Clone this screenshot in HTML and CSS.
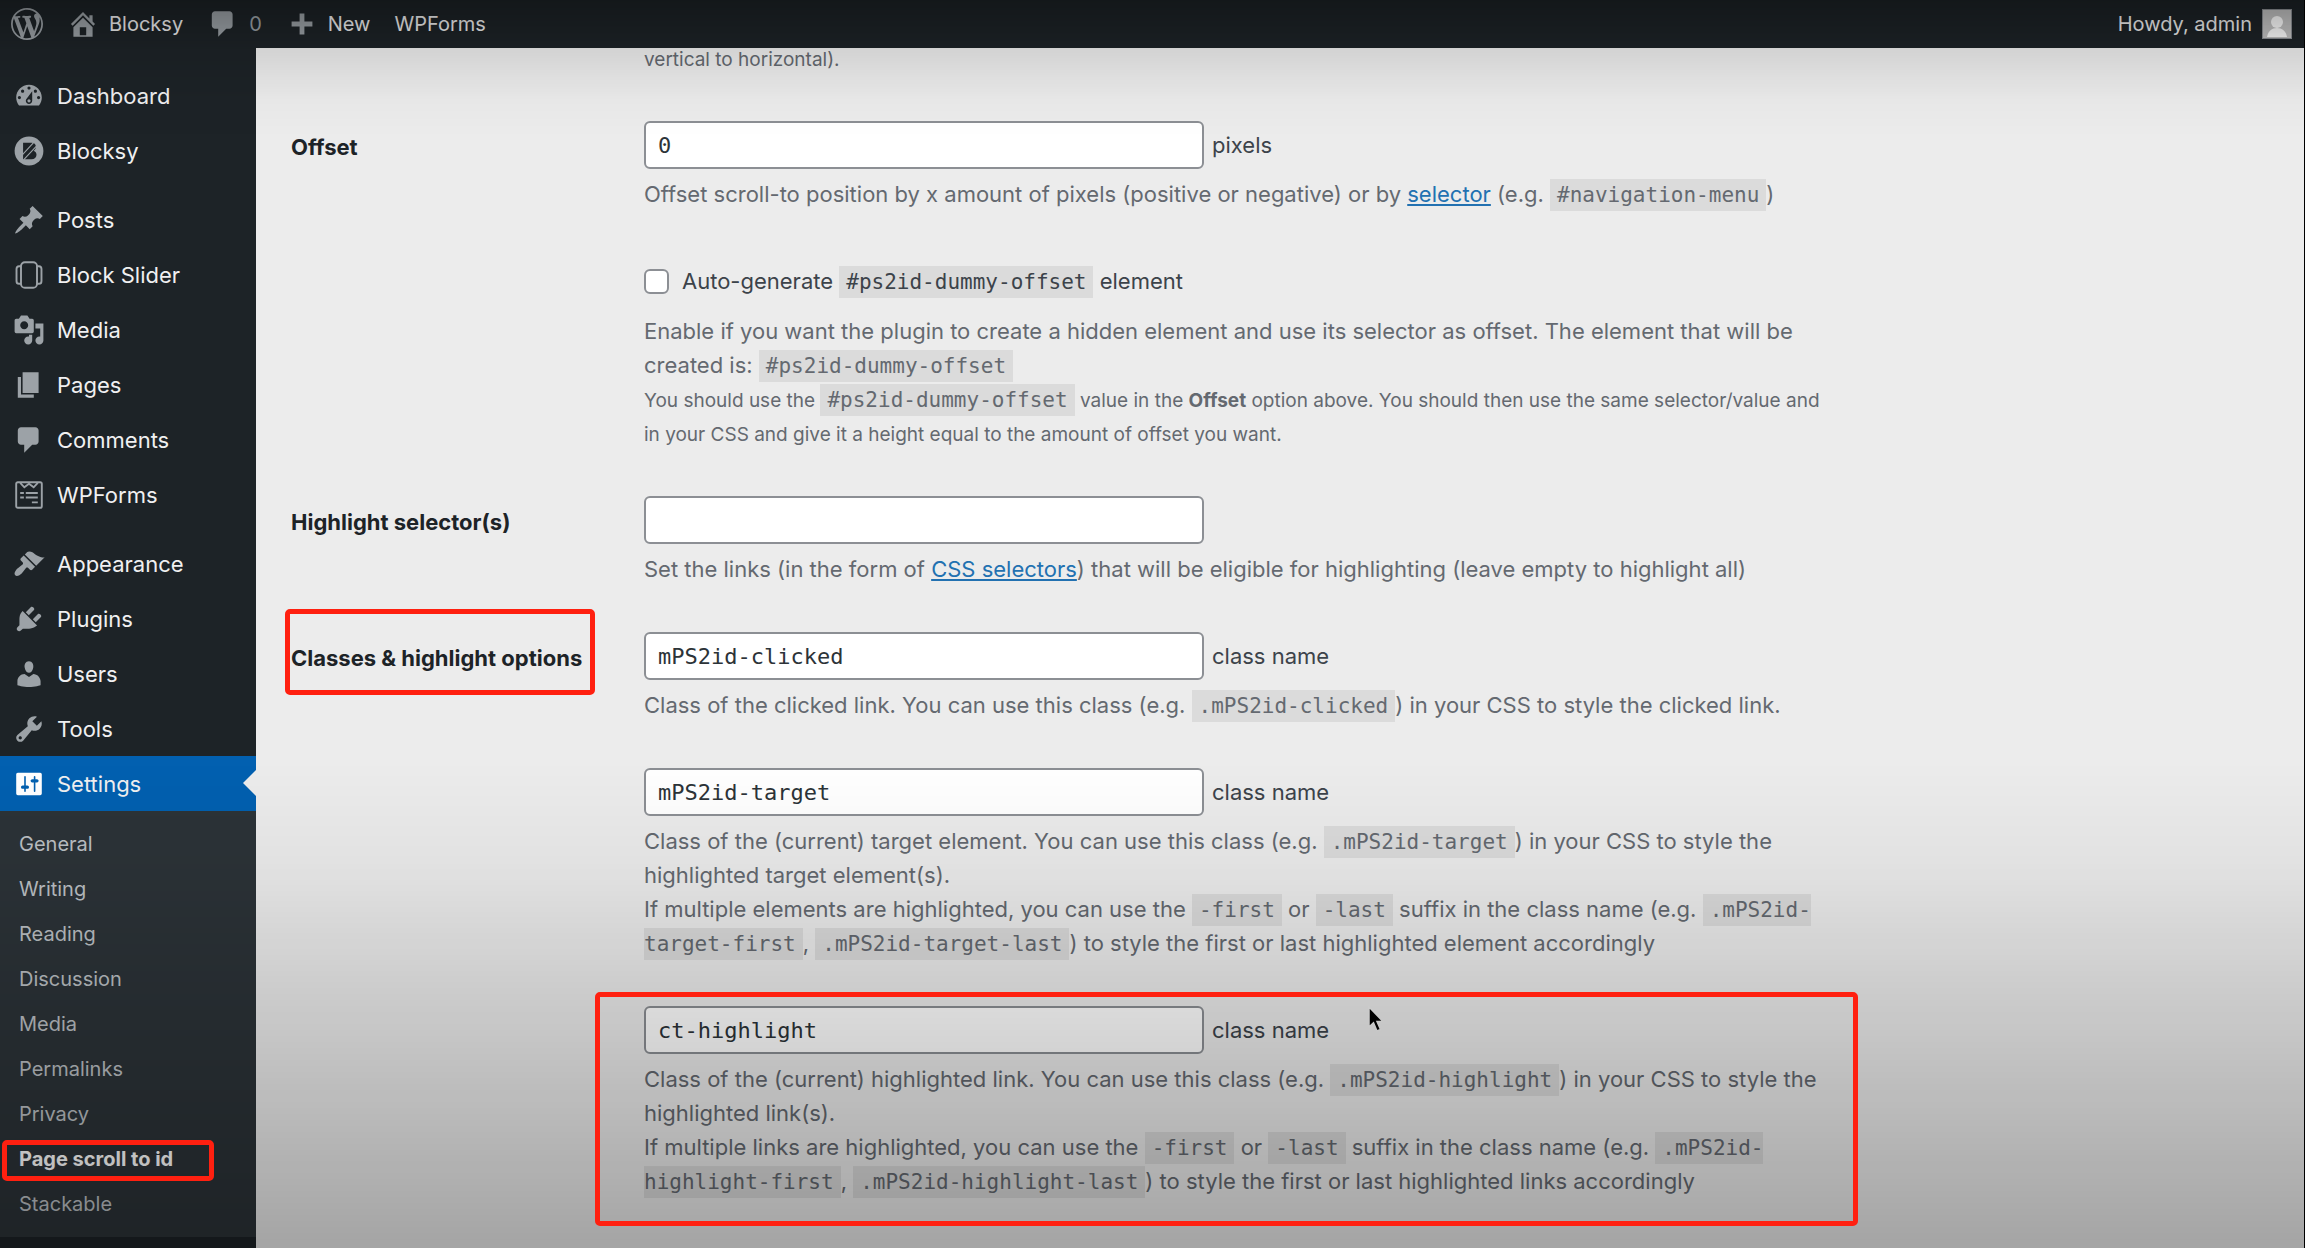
FILE: index.html
```
<!DOCTYPE html>
<html lang="en">
<head>
  <meta charset="UTF-8">
  <meta name="viewport" content="width=device-width, initial-scale=1.0">
  <title>Page scroll to id - Blocksy</title>
  <link rel="stylesheet" href="styles.css">
</head>
<body>
  <header class="adminbar">
    <a class="bar-logo" href="#" aria-label="About WordPress">
      <svg class="icon" viewBox="0 0 20 20"><path d="M20 10c0-5.51-4.49-10-10-10C4.48 0 0 4.49 0 10c0 5.52 4.48 10 10 10 5.51 0 10-4.48 10-10zM7.78 15.37L4.37 6.22c.55-.02 1.17-.08 1.17-.08.5-.06.44-1.13-.06-1.11 0 0-1.45.11-2.37.11-.18 0-.37 0-.58-.01C4.12 2.69 6.87 1.11 10 1.11c2.33 0 4.45.87 6.05 2.34-.68-.11-1.65.39-1.65 1.58 0 .74.45 1.36.9 2.1.35.61.55 1.36.55 2.46 0 1.49-1.4 5-1.4 5l-3.03-8.37c.54-.02.82-.17.82-.17.5-.05.44-1.25-.06-1.22 0 0-1.44.12-2.38.12-.87 0-2.33-.12-2.33-.12-.5-.03-.56 1.2-.06 1.22l.92.08 1.26 3.41zM17.41 10c.24-.64.74-1.87.43-4.25.7 1.29 1.05 2.71 1.05 4.25 0 3.29-1.73 6.24-4.4 7.78.97-2.59 1.94-5.2 2.92-7.78zM6.1 18.09C3.12 16.65 1.11 13.53 1.11 10c0-1.3.23-2.48.72-3.59C3.25 10.3 4.67 14.2 6.1 18.09zm4.03-6.63l2.58 6.98c-.86.29-1.76.45-2.71.45-.79 0-1.57-.11-2.29-.33.81-2.38 1.62-4.74 2.42-7.1z"/></svg>
    </a>
    <a class="bar-item" href="#">
      <svg class="icon" viewBox="0 0 20 20"><path d="M16 8.5l1.53 1.53-1.06 1.06L10 4.6l-6.47 6.49-1.06-1.06L10 2.5l4 4v-2h2v4zm-6-2.46l6 5.99V18H4v-5.97zM12 17v-5H8v5h4z"/></svg>
      <span>Blocksy</span>
    </a>
    <a class="bar-item bar-comments" href="#">
      <svg class="icon" viewBox="0 0 20 20"><path d="M5 2h9c1.1 0 2 .9 2 2v7c0 1.1-.9 2-2 2h-2l-5 5v-5H5c-1.1 0-2-.9-2-2V4c0-1.1.9-2 2-2z"/></svg>
      <span>0</span>
    </a>
    <a class="bar-item bar-new" href="#">
      <svg class="icon" viewBox="0 0 20 20"><path d="M8.500 3.500h3v5h5v3h-5v5h-3v-5h-5v-3h5z"/></svg>
      <span>New</span>
    </a>
    <a class="bar-item" href="#">WPForms</a>
    <a class="bar-item bar-account" href="#">
      <span>Howdy, admin</span>
      <svg class="avatar" viewBox="0 0 28 28"><rect width="28" height="28" fill="#c4c4c4"/><circle cx="14" cy="12" r="6" fill="#fff"/><path d="M4 27c1-6 5-9 10-9s9 3 10 9z" fill="#fff"/></svg>
    </a>
  </header>

  <div class="wrap">
    <nav class="sidebar">
      <ul class="menu">
        <li><a href="#"><svg class="icon" viewBox="0 0 20 20"><path d="M3.76 16h12.48c1.1-1.37 1.76-3.11 1.76-5 0-4.42-3.58-8-8-8s-8 3.58-8 8c0 1.89.66 3.63 1.76 5zM10 4c.55 0 1 .45 1 1s-.45 1-1 1-1-.45-1-1 .45-1 1-1zM6 6c.55 0 1 .45 1 1s-.45 1-1 1-1-.45-1-1 .45-1 1-1zm8 0c.55 0 1 .45 1 1s-.45 1-1 1-1-.45-1-1 .45-1 1-1zm-5.37 5.55L12 7v6c0 1.1-.9 2-2 2s-2-.9-2-2c0-.57.24-1.08.63-1.45zM4 10c.55 0 1 .45 1 1s-.45 1-1 1-1-.45-1-1 .45-1 1-1zm12 0c.55 0 1 .45 1 1s-.45 1-1 1-1-.45-1-1 .45-1 1-1zm-5 3c0-.55-.45-1-1-1s-1 .45-1 1 .45 1 1 1 1-.45 1-1z"/></svg>Dashboard</a></li>
        <li><a href="#"><svg class="icon" viewBox="0 0 20 20"><circle cx="10" cy="10" r="9"/><path class="cut" d="M6.300 4.800h5.200c1.800 0 2.800 1 2.800 2.500 0 1.100-.5 2-1.400 2.500 1.100.4 1.800 1.400 1.800 2.600 0 1.700-1.300 2.800-3.100 2.800H6.300z"/><path class="slash" d="M5.800 12.400L13 4.600M6.600 15.600l8.200-8.800"/></svg>Blocksy</a></li>
        <li class="gap"><a href="#"><svg class="icon" viewBox="0 0 20 20"><path d="M10.44 3.02l1.82-1.82 6.36 6.35-1.83 1.82c-1.05-.68-2.48-.57-3.41.36l-.75.75c-.92.93-1.04 2.35-.35 3.41l-1.83 1.82-2.41-2.41-2.8 2.79c-.42.42-3.38 2.71-3.8 2.29s1.86-3.39 2.28-3.81l2.79-2.79L4.1 9.36l1.83-1.82c1.05.69 2.48.57 3.4-.36l.75-.75c.93-.92 1.05-2.35.36-3.41z"/></svg>Posts</a></li>
        <li><a href="#"><svg class="icon line" viewBox="0 0 20 20"><rect x="5" y="2" width="10" height="16" rx="2.400"/><path d="M5 4.500H3.800c-1 0-1.600.8-1.600 1.800v7.400c0 1 .6 1.800 1.600 1.800H5M15 4.500h1.200c1 0 1.600.8 1.600 1.800v7.400c0 1-.6 1.800-1.600 1.800H15"/></svg>Block Slider</a></li>
        <li><a href="#"><svg class="icon" viewBox="0 0 20 20"><path d="M13 11V4c0-.55-.45-1-1-1h-1.67L9 1H5L3.67 3H2c-.55 0-1 .45-1 1v7c0 .55.45 1 1 1h10c.55 0 1-.45 1-1zM7 4.5c1.38 0 2.5 1.12 2.5 2.5S8.38 9.5 7 9.5 4.5 8.38 4.5 7 5.62 4.5 7 4.5zM14 6h5v10.5c0 1.38-1.12 2.5-2.5 2.5S14 17.88 14 16.5s1.12-2.5 2.5-2.5c.17 0 .34.02.5.05V9h-3V6zm-4 8.05V13h2v3.5c0 1.38-1.12 2.5-2.5 2.5S7 17.88 7 16.5 8.12 14 9.5 14c.17 0 .34.02.5.05z"/></svg>Media</a></li>
        <li><a href="#"><svg class="icon" viewBox="0 0 20 20"><path d="M6 15V2h10v13H6zm-1 1h8v2H3V5h2v11z"/></svg>Pages</a></li>
        <li><a href="#"><svg class="icon" viewBox="0 0 20 20"><path d="M5 2h9c1.1 0 2 .9 2 2v7c0 1.1-.9 2-2 2h-2l-5 5v-5H5c-1.1 0-2-.9-2-2V4c0-1.1.9-2 2-2z"/></svg>Comments</a></li>
        <li><a href="#"><svg class="icon line" viewBox="0 0 20 20"><rect x="2" y="2" width="16" height="16" rx="1"/><path d="M4.5 2.4l2.6 2.8L10 3l2.9 2.2 2.6-2.8M4.5 8.7h2.3M8 8.7h7.5M4.5 11.6h2.3M8 11.6h7.5M11.8 14.6h3.7"/></svg>WPForms</a></li>
        <li class="gap"><a href="#"><svg class="icon" viewBox="0 0 20 20"><path d="M14.48 11.06L7.41 3.99l1.5-1.5c.5-.56 2.3-.47 3.51.32 1.21.8 1.43 1.28 2.91 2.1 1.18.64 2.45 1.26 4.45.85zm-.71.71L6.7 4.7 4.93 6.47c-.39.39-.39 1.02 0 1.41l1.06 1.06c.39.39.39 1.03 0 1.42-.6.6-1.43 1.11-2.21 1.69-.35.26-.7.53-1.01.84C1.43 14.23.4 16.08 1.4 17.07c.99 1 2.84-.03 4.18-1.36.31-.31.58-.66.85-1.02.57-.78 1.08-1.61 1.69-2.21.39-.39 1.02-.39 1.41 0l1.06 1.06c.39.39 1.02.39 1.41 0z"/></svg>Appearance</a></li>
        <li><a href="#"><svg class="icon" viewBox="0 0 20 20"><path d="M13.11 4.36L9.87 7.6 8 5.73l3.24-3.24c.35-.34 1.05-.2 1.56.32.52.51.66 1.21.31 1.55zm-8 1.77l.91-1.12 9.01 9.01-1.19.84c-.71.71-2.63 1.16-3.82 1.16H6.14L4.9 17.26c-.59.59-1.54.59-2.12 0-.59-.58-.59-1.53 0-2.12l1.24-1.24v-3.88c0-1.13.4-3.19 1.09-3.89zm7.26 3.97l3.24-3.24c.34-.35 1.04-.21 1.55.31.52.51.66 1.21.31 1.55l-3.24 3.25z"/></svg>Plugins</a></li>
        <li><a href="#"><svg class="icon" viewBox="0 0 20 20"><path d="M10 9.25c-2.27 0-2.73-3.44-2.73-3.44C7 4.02 7.82 2 9.97 2c2.16 0 2.98 2.02 2.71 3.81 0 0-.41 3.44-2.68 3.44zm0 2.57L12.72 10c2.39 0 4.52 2.33 4.52 4.53v2.49s-3.65 1.13-7.24 1.13c-3.65 0-7.24-1.13-7.24-1.13v-2.49c0-2.25 1.94-4.48 4.47-4.48z"/></svg>Users</a></li>
        <li><a href="#"><svg class="icon" viewBox="0 0 20 20"><path d="M16.68 9.77c-1.34 1.34-3.3 1.67-4.95.99l-5.41 6.52c-.99.99-2.59.99-3.58 0s-.99-2.59 0-3.57l6.52-5.42c-.68-1.65-.35-3.61.99-4.95 1.28-1.28 3.12-1.62 4.72-1.06l-2.89 2.89 2.82 2.82 2.86-2.87c.53 1.58.18 3.39-1.08 4.65zM3.81 16.21c.4.39 1.04.39 1.43 0 .4-.4.4-1.04 0-1.43-.39-.4-1.03-.4-1.43 0-.39.39-.39 1.03 0 1.43z"/></svg>Tools</a></li>
        <li class="current"><a href="#"><svg class="icon" viewBox="0 0 20 20"><path d="M18 16V4c0-.55-.45-1-1-1H3c-.55 0-1 .45-1 1v12c0 .55.45 1 1 1h14c.55 0 1-.45 1-1zM8 11h1c.55 0 1 .45 1 1s-.45 1-1 1H8v1.5c0 .28-.22.5-.5.5s-.5-.22-.5-.5V13H6c-.55 0-1-.45-1-1s.45-1 1-1h1V5.5c0-.28.22-.5.5-.5s.5.22.5.5V11zm5-2h-1c-.55 0-1-.45-1-1s.45-1 1-1h1V5.5c0-.28.22-.5.5-.5s.5.22.5.5V7h1c.55 0 1 .45 1 1s-.45 1-1 1h-1v5.5c0 .28-.22.5-.5.5s-.5-.22-.5-.5V9z"/></svg>Settings</a></li>
      </ul>
      <ul class="submenu">
        <li><a href="#">General</a></li>
        <li><a href="#">Writing</a></li>
        <li><a href="#">Reading</a></li>
        <li><a href="#">Discussion</a></li>
        <li><a href="#">Media</a></li>
        <li><a href="#">Permalinks</a></li>
        <li><a href="#">Privacy</a></li>
        <li class="marked"><a class="active" href="#">Page scroll to id</a></li>
        <li><a href="#">Stackable</a></li>
      </ul>
    </nav>

    <main class="content">
      <form class="form">
        <div class="row">
          <div class="fields">
            <p class="desc first-line"><small>vertical to horizontal).</small></p>
          </div>
        </div>

        <div class="row">
          <label class="title" for="offset">Offset</label>
          <div class="fields">
            <div class="field">
              <div class="control"><input type="text" id="offset" value="0"><span>pixels</span></div>
              <p class="desc">Offset scroll-to position by x amount of pixels (positive or negative) or by <a href="#">selector</a> (e.g. <code>#navigation-menu</code>)</p>
            </div>
            <div class="field check-field">
              <div class="check"><input type="checkbox" id="dummy"><label for="dummy">Auto-generate <code>#ps2id-dummy-offset</code> element</label></div>
              <p class="desc">Enable if you want the plugin to create a hidden element and use its selector as offset. The element that will be<br>
              created is: <code>#ps2id-dummy-offset</code><br>
              <small>You should use the <code>#ps2id-dummy-offset</code> value in the <b>Offset</b> option above. You should then use the same selector/value and<br>
              in your CSS and give it a height equal to the amount of offset you want.</small></p>
            </div>
          </div>
        </div>

        <div class="row">
          <label class="title" for="selectors">Highlight selector(s)</label>
          <div class="fields">
            <div class="field">
              <div class="control"><input type="text" id="selectors" value=""></div>
              <p class="desc">Set the links (in the form of <a href="#">CSS selectors</a>) that will be eligible for highlighting (leave empty to highlight all)</p>
            </div>
          </div>
        </div>

        <div class="row">
          <label class="title marked" for="clicked">Classes &amp; highlight options</label>
          <div class="fields">
            <div class="field">
              <div class="control"><input type="text" id="clicked" value="mPS2id-clicked"><label for="clicked">class name</label></div>
              <p class="desc">Class of the clicked link. You can use this class (e.g. <code>.mPS2id-clicked</code>) in your CSS to style the clicked link.</p>
            </div>
            <div class="field">
              <div class="control"><input type="text" id="target" value="mPS2id-target"><label for="target">class name</label></div>
              <p class="desc">Class of the (current) target element. You can use this class (e.g. <code>.mPS2id-target</code>) in your CSS to style the<br>
              highlighted target element(s).<br>
              If multiple elements are highlighted, you can use the <code>-first</code> or <code>-last</code> suffix in the class name (e.g. <code>.mPS2id-<br>target-first</code>, <code>.mPS2id-target-last</code>) to style the first or last highlighted element accordingly</p>
            </div>
            <div class="field marked">
              <div class="control"><input type="text" id="highlight" value="ct-highlight"><label for="highlight">class name</label>
                <svg class="cursor" viewBox="0 0 18 28"><path d="M2 1v20l4.500-4.200 3.500 8.200 3.500-1.500-3.500-8h6z" fill="#000" stroke="#eee" stroke-width="1.500"/></svg>
              </div>
              <p class="desc">Class of the (current) highlighted link. You can use this class (e.g. <code>.mPS2id-highlight</code>) in your CSS to style the<br>
              highlighted link(s).<br>
              If multiple links are highlighted, you can use the <code>-first</code> or <code>-last</code> suffix in the class name (e.g. <code>.mPS2id-<br>highlight-first</code>, <code>.mPS2id-highlight-last</code>) to style the first or last highlighted links accordingly</p>
            </div>
          </div>
        </div>
      </form>
    </main>
  </div>
  <div class="shade"></div>
</body>
</html>
```
FILE: styles.css
```
*,
*::before,
*::after {
  box-sizing: border-box;
}
body {
  margin: 0;
  min-height: 100vh;
  display: flex;
  flex-direction: column;
  overflow: hidden;
  border-right: 1px solid #000;
  font-family: Inter, "Liberation Sans", sans-serif;
  font-size: 22px;
  color: #3c434a;
  background-color: #ececec;
}
a {
  color: #2271b1;
}
ul {
  list-style: none;
  margin: 0;
  padding: 0;
}
.icon {
  width: 32px;
  height: 32px;
  flex: none;
  fill: #9ca2a7;
}
.icon .cut {
  fill: #1d2327;
}
.icon .slash {
  stroke: #9ca2a7;
  stroke-width: 0.7;
}
.icon.line {
  fill: none;
  stroke: #9ca2a7;
  stroke-width: 1.2;
}

/* top bar */
.adminbar {
  height: 48px;
  display: flex;
  align-items: center;
  padding: 0 12px 0 11px;
  background-color: #1d2327;
  font-size: 20px;
}
.adminbar a {
  display: flex;
  align-items: center;
  color: #f0f0f1;
  text-decoration: none;
}
.bar-item {
  margin-left: 24px;
  gap: 10px;
}
.adminbar .bar-comments {
  color: #9ca2a7;
}
.adminbar .bar-account {
  margin-left: auto;
}
.avatar {
  width: 30px;
  height: 30px;
  border: 1px solid #8c8f94;
}

/* left menu */
.wrap {
  flex: 1;
  display: flex;
}
.sidebar {
  width: 256px;
  flex: none;
  background-color: #1d2327;
}
.menu {
  padding-top: 20px;
}
.menu a {
  height: 55px;
  display: flex;
  align-items: center;
  gap: 12px;
  padding-left: 13px;
  color: #f0f0f1;
  text-decoration: none;
}
.menu .gap {
  margin-top: 14px;
}
.current {
  position: relative;
  background-color: #0260b0;
}
.current .icon {
  fill: #fff;
}
.current::after {
  content: "";
  position: absolute;
  right: 0;
  top: 14px;
  border: 13px solid transparent;
  border-left: 0;
  border-right-color: #ececec;
}
.submenu {
  padding: 11px 0 10px;
  background-color: #2c3338;
}
.submenu a {
  display: block;
  padding-left: 19px;
  line-height: 45px;
  font-size: 20px;
  color: #bcc0c4;
  text-decoration: none;
}
.submenu .active {
  color: #fff;
  font-weight: 700;
}

/* settings form */
.content {
  flex: 1;
  padding-left: 35px;
}
.row {
  display: grid;
  grid-template-columns: 353px 1fr;
}
.fields {
  grid-column: 2;
  white-space: nowrap;
}
.title {
  line-height: 52px;
  font-weight: 700;
  color: #1d2327;
  white-space: nowrap;
}
.field {
  padding-bottom: 46px;
}
.control {
  display: flex;
  align-items: center;
  gap: 8px;
  margin-bottom: 8px;
}
.control input {
  width: 560px;
  height: 48px;
  padding: 0 12px;
  border: 2px solid #8c8f94;
  border-radius: 6px;
  background-color: #fff;
  font-family: "DejaVu Sans Mono", monospace;
  font-size: 22px;
  color: #2c3338;
}
.desc {
  margin: 0;
  line-height: 34px;
  color: #646970;
}
.desc small {
  font-size: 19px;
  line-height: 1;
}
.first-line {
  height: 73px;
  line-height: 20px;
}
code {
  padding: 4px 7px;
  background-color: rgba(0, 0, 0, 0.07);
  font-family: "DejaVu Sans Mono", monospace;
  font-size: 21px;
  line-height: 1;
}
.check-field {
  padding-top: 7px;
}
.check {
  display: flex;
  align-items: center;
  gap: 13px;
  line-height: 34px;
  margin-bottom: 16px;
}
.check input {
  appearance: none;
  width: 25px;
  height: 25px;
  margin: 0;
  border: 2px solid #8c8f94;
  border-radius: 6px;
  background-color: #fff;
}

/* red frames around the options to look at */
.marked {
  position: relative;
}
.marked::before {
  content: "";
  position: absolute;
  z-index: 2;
  border: 5px solid #ff2010;
  border-radius: 5px;
  pointer-events: none;
}
.submenu .marked::before {
  inset: 3px 42px 1px 2px;
}
.title.marked {
  align-self: start;
}
.title.marked::before {
  inset: -23px 49px -11px -6px;
}
.field.marked::before {
  width: 1263px;
  top: -14px;
  bottom: 18px;
  left: -49px;
}
.cursor {
  width: 18px;
  height: 28px;
  margin-left: 30px;
  align-self: flex-start;
}

/* darkened top and bottom */
.shade {
  position: fixed;
  inset: 0;
  z-index: 1;
  pointer-events: none;
  background-image: linear-gradient(rgba(0, 0, 0, 0.32), rgba(0, 0, 0, 0.1) 4%, rgba(0, 0, 0, 0.02) 8%, transparent 11%, transparent 61%, rgba(0, 0, 0, 0.04) 69%, rgba(0, 0, 0, 0.12) 78%, rgba(0, 0, 0, 0.3));
}
```
